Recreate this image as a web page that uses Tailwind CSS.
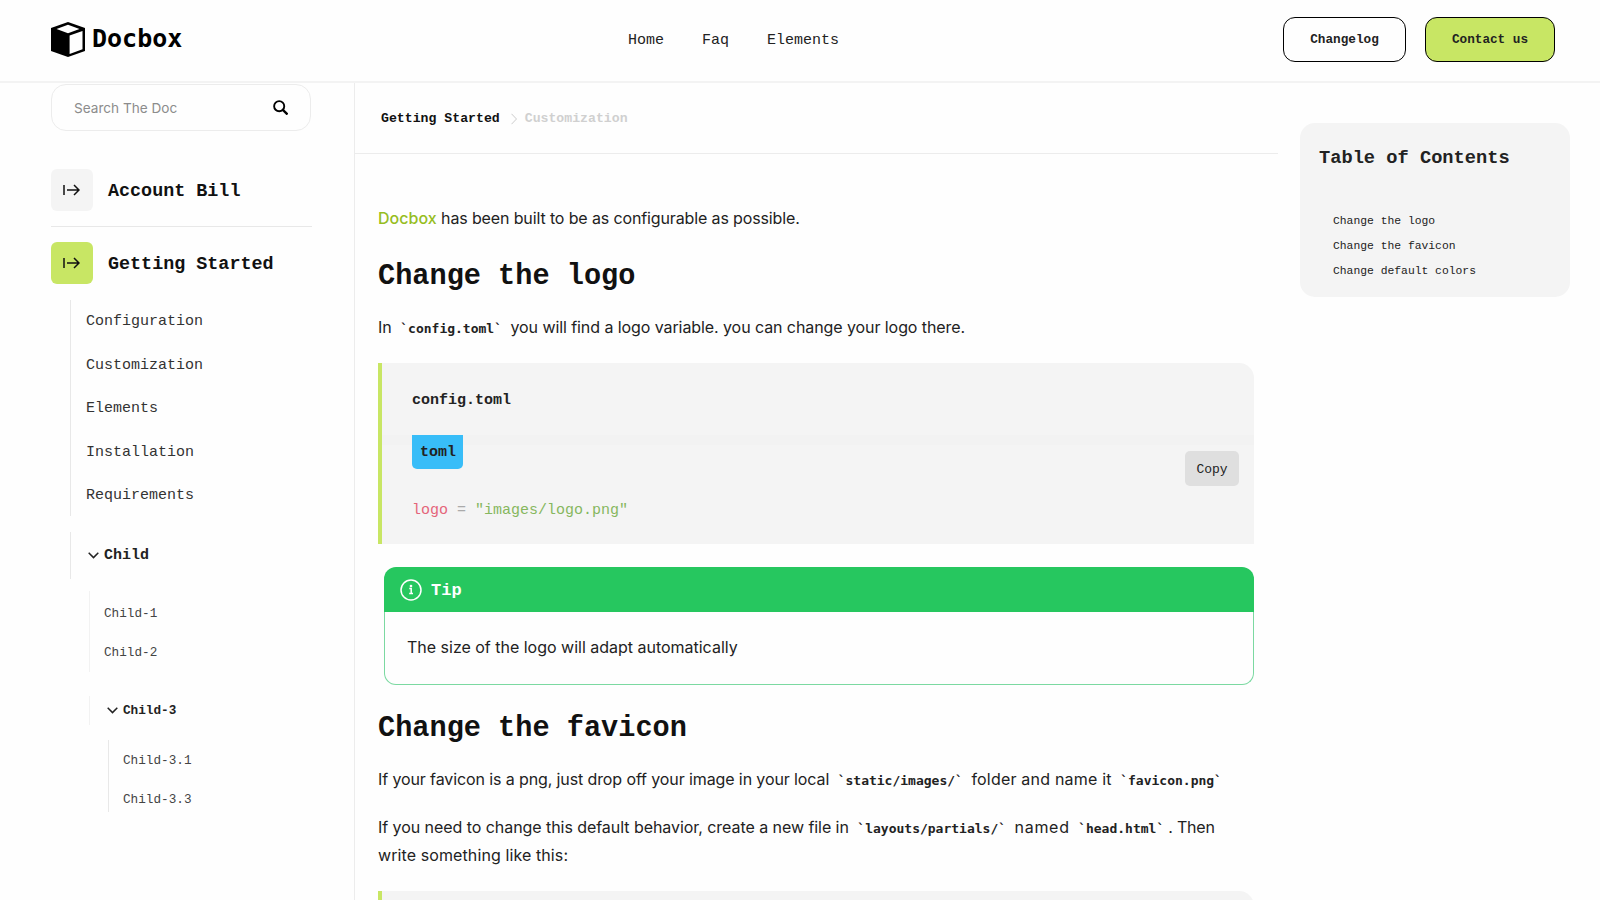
<!DOCTYPE html>
<html lang="en">
<head>
<meta charset="utf-8">
<title>Docbox</title>
<script src="https://cdn.jsdelivr.net/npm/@tailwindcss/browser@4"></script>
</head>
<body class="h-[900px] w-[1600px] overflow-hidden bg-[#fefefe] font-['Liberation_Mono',monospace] text-[15px] text-[#222]">
<header class="flex h-[83px] border-b-2 border-[#f3f3f3] pl-[51px] pr-[45px]">
  <a class="flex w-[577px] items-start gap-[7px] pt-[22px]">
    <svg class="h-[35px] w-[34px]" viewBox="0 0 34 35"><path fill="#000" d="M17 0 34 6v23L17 35 0 29V6z"/><path fill="#fefefe" d="M17 2.800 28.500 7 17 11.200 5.500 7zM31.500 9v18.200L18.600 32V13.600z"/></svg>
    <span class="pt-px font-['DejaVu_Sans_Mono',monospace] text-[25px] leading-[32px] font-bold text-black">Docbox</span>
  </a>
  <nav class="flex h-[82px] items-center gap-[38px]"><a>Home</a><a>Faq</a><a>Elements</a></nav>
  <div class="ml-auto flex gap-[19px] pt-[17px] text-[12.7px] font-bold">
    <button class="h-[45px] w-[123px] rounded-xl border border-black">Changelog</button>
    <button class="h-[45px] w-[130px] rounded-xl border border-black bg-[#c8e664]">Contact us</button>
  </div>
</header>
<div class="flex h-[817px] overflow-hidden">
  <aside class="w-[354px] shrink-0 pl-[51px] pt-px">
    <div class="flex h-[47px] w-[260px] items-center justify-between rounded-[15px] border border-[#ececec] px-[22px]">
      <span class="pt-px font-[Inter,sans-serif] text-[13.6px] whitespace-nowrap text-[#8c8c8c]">Search The Doc</span>
      <svg class="size-[15px] shrink-0" viewBox="0 0 16 16" fill="none" stroke="#000" stroke-width="2"><circle cx="6.600" cy="6.600" r="5.400"/><path stroke-width="2.500" d="m10.500 10.500 5 5"/></svg>
    </div>
    <div class="mt-[38px] flex h-[58px] w-[261px] gap-[15px] border-b border-[#e8e8e8] text-[18.4px] font-bold text-[#111]">
      <span class="flex size-[42px] items-center justify-center rounded-md bg-[#f4f4f4]"><svg class="mr-px h-[12px] w-[17px]" viewBox="0 0 17 12" fill="none" stroke="#111" stroke-width="1.500"><path d="M1 1v10M4 6h12M11 1l5 5-5 5"/></svg></span>
      <span class="leading-[46px]">Account Bill</span>
    </div>
    <div class="mt-[15px] flex h-[42px] gap-[15px] text-[18.4px] font-bold text-[#111]">
      <span class="flex size-[42px] items-center justify-center rounded-md bg-[#c8e664]"><svg class="mr-px h-[12px] w-[17px]" viewBox="0 0 17 12" fill="none" stroke="#111" stroke-width="1.500"><path d="M1 1v10M4 6h12M11 1l5 5-5 5"/></svg></span>
      <span class="leading-[46px]">Getting Started</span>
    </div>
    <ul class="ml-[19px] mt-4 h-[216px] border-l border-[#e8e8e8] pl-[15px] leading-[43.5px] text-[#333]"><li>Configuration</li><li>Customization</li><li>Elements</li><li>Installation</li><li>Requirements</li></ul>
    <div class="ml-[19px] mt-4 flex h-[47px] items-center gap-[5px] border-l border-[#e8e8e8] pl-[17px] font-bold"><svg class="h-[7px] w-[11px]" viewBox="0 0 11 7" fill="none" stroke="#222" stroke-width="1.500"><path d="m.7.8 4.800 4.800L10.300.8"/></svg><span class="pt-0.5">Child</span></div>
    <ul class="ml-[38px] mt-3 h-[81px] border-l border-[#f2f2f2] pl-[14px] pt-1 text-[12.7px] leading-[38.5px] text-[#444]"><li>Child-1</li><li>Child-2</li></ul>
    <div class="ml-[38px] mt-6 flex h-[29px] items-center gap-[5px] border-l border-[#f2f2f2] pl-[17px] text-[12.7px] font-bold"><svg class="h-[7px] w-[11px]" viewBox="0 0 11 7" fill="none" stroke="#222" stroke-width="1.500"><path d="m.7.8 4.800 4.800L10.300.8"/></svg>Child-3</div>
    <ul class="ml-[57px] mt-[15px] h-[72px] border-l border-[#e8e8e8] pl-[14px] pt-px text-[12.7px] leading-[39px] text-[#444]"><li>Child-3.1</li><li>Child-3.3</li></ul>
  </aside>
  <main class="w-[924px] shrink-0 border-l border-[#ececec]">
    <div class="flex h-[71px] items-center gap-2 border-b border-[#ececec] pl-[26px] pt-0.5 text-[13.2px] font-bold text-[#111]"><span>Getting Started</span><svg class="ml-[3px] h-3 w-[6px]" viewBox="0 0 6 12" fill="none" stroke="#ccc"><path d="m.5.8 5 5.200-5 5.200"/></svg><span class="text-[#d0d0d0]">Customization</span></div>
    <article class="w-[899px] pl-[23px] pt-[48px] font-[Inter,sans-serif] text-[16px] whitespace-nowrap">
      <p class="leading-8 tracking-[-.13px]"><span class="font-medium tracking-[.02px] text-[#96bd1f]">Docbox</span> has been built to be as configurable as possible.</p>
      <h2 class="mt-[23px] font-['Liberation_Mono',monospace] text-[28.6px] leading-[40px] font-bold text-[#111]">Change the logo</h2>
      <p class="mt-[14px] leading-8">In <code class="px-1 font-['DejaVu_Sans_Mono',monospace] text-[13px] font-bold">`config.toml`</code> <span class="tracking-[-.08px]">you will find a logo variable. you can change your logo there.</span></p>
      <section class="relative mt-[18px] h-[181px] rounded-tr-[15px] border-l-4 border-[#c8e664] bg-[#f4f4f4] pl-[30px] pt-6 font-['Liberation_Mono',monospace] text-[15px]">
        <div class="h-12 leading-7 font-bold">config.toml</div>
        <div class="-ml-[30px] h-[10px] bg-[#f2f2f2] pl-[30px]"><span class="block h-[34px] w-[51px] rounded-b-[5px] bg-[#38bdf8] pl-2 leading-[36px] font-bold">toml</span></div>
        <pre class="mt-[54px] font-['Liberation_Mono',monospace] leading-6"><span class="text-[#e4647a]">logo</span><span class="text-[#aaa]"> = </span><span class="text-[#86b75e]">"images/logo.png"</span></pre>
        <button class="absolute top-[88px] right-[15px] h-[35px] w-[54px] rounded-[5px] bg-[#dfdfdf] pt-0.5 text-[13px]">Copy</button>
      </section>
      <section class="mt-[23px] ml-[6px]">
        <h3 class="flex h-[45px] items-center gap-[9px] rounded-t-xl bg-[#26c75f] pl-4 font-['Liberation_Mono',monospace] text-[17px] font-bold text-white"><svg class="size-[22px]" viewBox="0 0 22 22" fill="none" stroke="#fff" stroke-width="1.500"><circle cx="11" cy="11" r="10"/><path d="M9.300 9.500h1.900v5M9.200 14.500h3.800"/><circle cx="11" cy="7" r=".6" fill="#fff"/></svg><span class="pt-0.5">Tip</span></h3>
        <p class="h-[73px] rounded-b-xl border border-t-0 border-[#7bd9a1] pt-[19px] pl-[22px] leading-8 tracking-[-.01px]">The size of the logo will adapt automatically</p>
      </section>
      <h2 class="mt-[23px] font-['Liberation_Mono',monospace] text-[28.6px] leading-[42px] font-bold text-[#111]">Change the favicon</h2>
      <p class="mt-[16px] leading-[27px]"><span class="tracking-[-.11px]">If your favicon is a png, just drop off your image in your local</span> <code class="px-1 font-['DejaVu_Sans_Mono',monospace] text-[13px] font-bold">`static/images/`</code> <span class="tracking-[.2px]">folder and name it</span> <code class="px-1 font-['DejaVu_Sans_Mono',monospace] text-[13px] font-bold">`favicon.png`</code></p>
      <p class="mt-[20px] leading-[27px]"><span class="tracking-[-.055px]">If you need to change this default behavior, create a new file in</span> <code class="px-1 font-['DejaVu_Sans_Mono',monospace] text-[13px] font-bold">`layouts/partials/`</code> <span class="tracking-[.7px]">named</span> <code class="px-1 font-['DejaVu_Sans_Mono',monospace] text-[13px] font-bold">`head.html`</code><span class="tracking-[-.2px]">. Then</span><br><span class="tracking-[.1px]">write something like this:</span></p>
      <section class="mt-[22px] h-[180px] rounded-tr-[15px] border-l-4 border-[#c8e664] bg-[#f4f4f4]"></section>
    </article>
  </main>
  <aside class="ml-[22px] mt-[40px] h-[174px] w-[270px] rounded-[15px] bg-[#f4f4f4] pt-[21px] pl-[19px]">
    <h2 class="text-[18.7px] leading-7 font-bold text-[#222]">Table of Contents</h2>
    <ul class="mt-[37px] pl-[14px] text-[11.35px] leading-[24.8px]"><li>Change the logo</li><li>Change the favicon</li><li>Change default colors</li></ul>
  </aside>
</div>
</body>
</html>
